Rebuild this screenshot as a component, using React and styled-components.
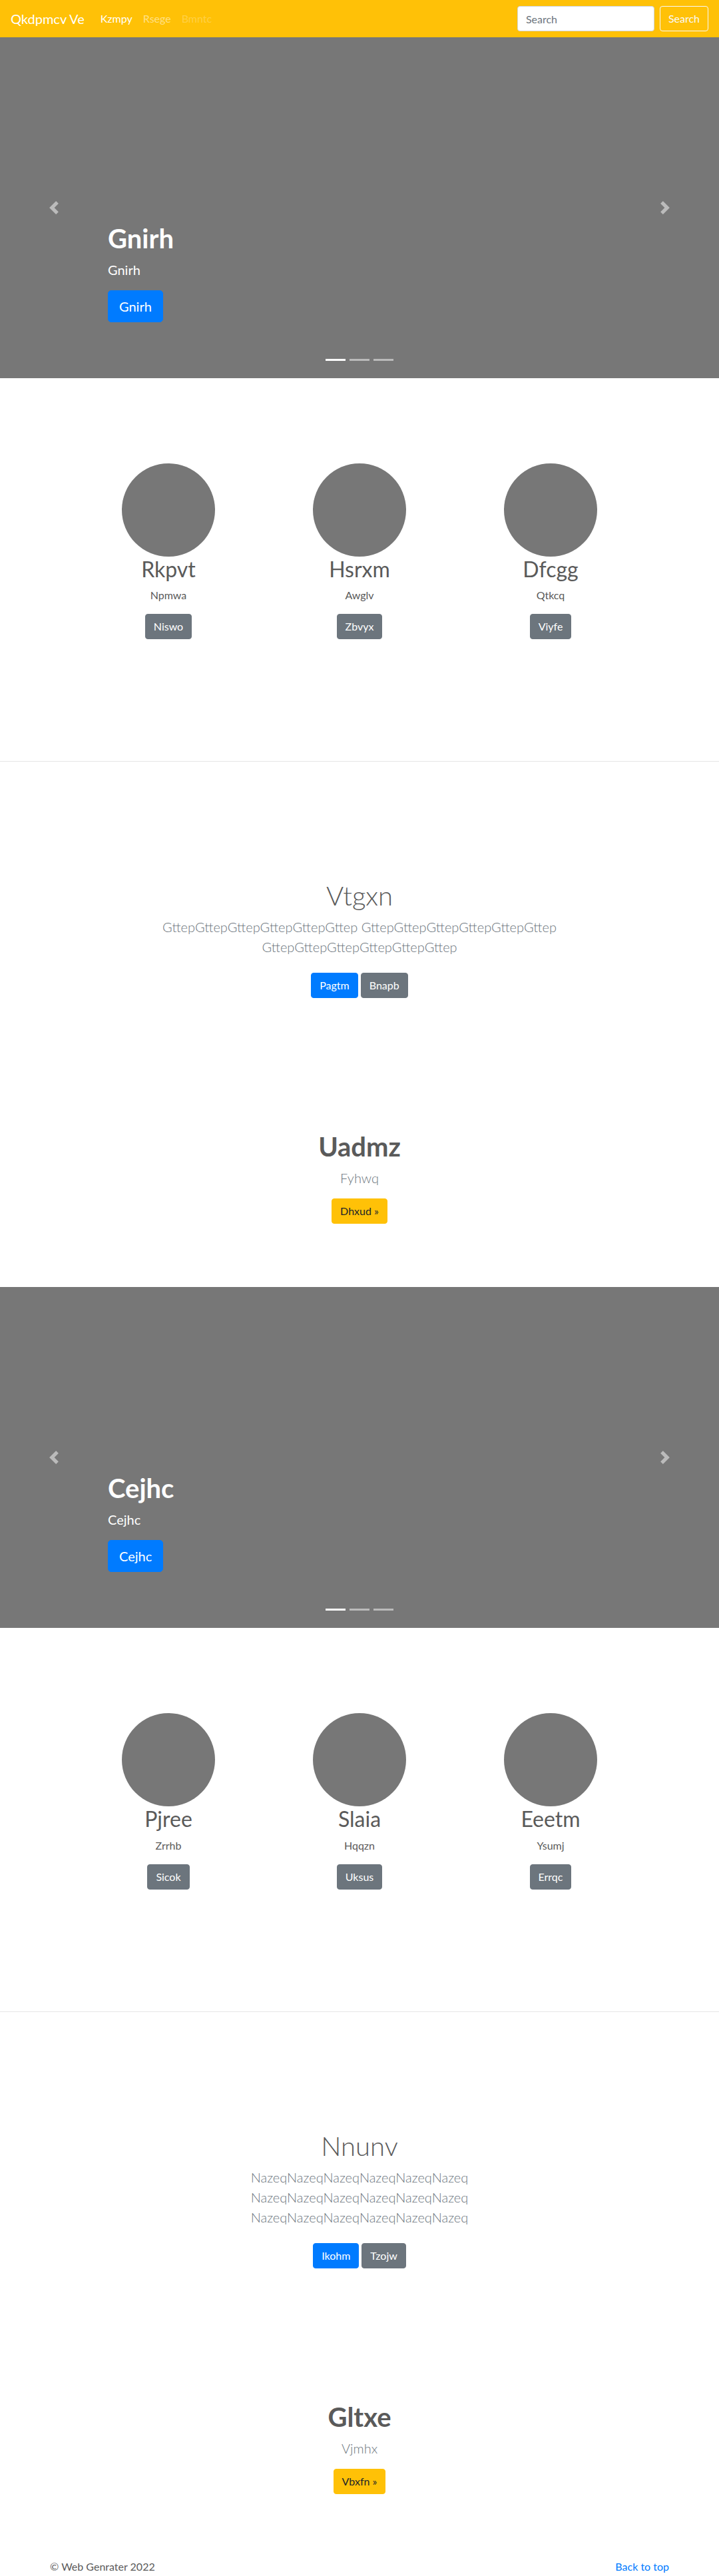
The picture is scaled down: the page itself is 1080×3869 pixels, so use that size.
import React from "react";
import styled, { createGlobalStyle, css } from "styled-components";

const GlobalStyle = createGlobalStyle`
    *, *::before, *::after { box-sizing: border-box; }
    body {
        margin: 0;
        font-family: Lato, "Open Sans", sans-serif;
        font-size: 16px;
        line-height: 1.5;
        color: #5a5a5a;
        background: #fff;
    }
`;

const blocks = [
    {
        slide: "Gnirh",
        features: [
            { name: "Rkpvt", text: "Npmwa", action: "Niswo" },
            { name: "Hsrxm", text: "Awglv", action: "Zbvyx" },
            { name: "Dfcgg", text: "Qtkcq", action: "Viyfe" },
        ],
        album: {
            title: "Vtgxn",
            lead: "GttepGttepGttepGttepGttepGttep GttepGttepGttepGttepGttepGttep GttepGttepGttepGttepGttepGttep",
            primary: "Pagtm",
            secondary: "Bnapb",
        },
        jumbo: { title: "Uadmz", lead: "Fyhwq", action: "Dhxud »" },
    },
    {
        slide: "Cejhc",
        features: [
            { name: "Pjree", text: "Zrrhb", action: "Sicok" },
            { name: "Slaia", text: "Hqqzn", action: "Uksus" },
            { name: "Eeetm", text: "Ysumj", action: "Errqc" },
        ],
        album: {
            title: "Nnunv",
            lead: "NazeqNazeqNazeqNazeqNazeqNazeq NazeqNazeqNazeqNazeqNazeqNazeq NazeqNazeqNazeqNazeqNazeqNazeq",
            primary: "Ikohm",
            secondary: "Tzojw",
        },
        jumbo: { title: "Gltxe", lead: "Vjmhx", action: "Vbxfn »" },
    },
];

// ---- buttons

const variants = {
    primary: css`
        background: #007bff;
        border-color: #007bff;
        color: #fff;
    `,
    secondary: css`
        background: #6c757d;
        border-color: #6c757d;
        color: #fff;
    `,
    warning: css`
        background: #ffc107;
        border-color: #ffc107;
        color: #212529;
    `,
    outlineLight: css`
        background: transparent;
        border-color: #f8f9fa;
        color: #f8f9fa;
    `,
};

const Button = styled.a`
    display: inline-block;
    font-family: inherit;
    font-weight: 400;
    text-decoration: none;
    text-align: center;
    border: 1px solid transparent;
    cursor: pointer;
    white-space: nowrap;
    ${(p) =>
        p.$size === "lg"
            ? css`
                  padding: 8px 16px;
                  font-size: 20px;
                  line-height: 1.5;
                  border-radius: 5px;
              `
            : css`
                  padding: 6px 12px;
                  font-size: 16px;
                  line-height: 1.5;
                  border-radius: 4px;
              `}
    ${(p) => variants[p.$variant || "primary"]}
`;

// ---- navbar

const Navbar = styled.nav`
    height: 56px;
    padding: 0 16px;
    background: #ffc107;
    display: flex;
    align-items: center;
`;

const Brand = styled.a`
    font-size: 20px;
    line-height: 30px;
    color: #fff;
    text-decoration: none;
    margin-right: 16px;
`;

const NavList = styled.ul`
    display: flex;
    list-style: none;
    margin: 0;
    padding: 0;
    flex: 1;
`;

const NavLink = styled.a`
    display: block;
    padding: 8px;
    color: ${(p) =>
        p.$state === "active"
            ? "#fff"
            : p.$state === "disabled"
            ? "rgba(255,255,255,.25)"
            : "rgba(255,255,255,.5)"};
    text-decoration: none;
`;

const SearchForm = styled.form`
    display: flex;
    align-items: center;
    gap: 8px;
`;

const SearchInput = styled.input`
    width: 206px;
    height: 38px;
    padding: 6px 12px;
    font-family: inherit;
    font-size: 16px;
    color: #495057;
    background: #fff;
    border: 1px solid #ced4da;
    border-radius: 4px;
    &::placeholder {
        color: #6c757d;
    }
`;

// ---- carousel

const CarouselFrame = styled.div`
    position: relative;
    height: 512px;
    background: #777;
    overflow: hidden;
`;

const Caption = styled.div`
    position: absolute;
    left: 15%;
    right: 15%;
    bottom: 48px;
    padding: 20px 0;
    color: #fff;
    text-align: left;
`;

const CaptionTitle = styled.h1`
    margin: 0 0 8px;
    font-size: 40px;
    font-weight: 700;
    line-height: 1.2;
`;

const CaptionText = styled.p`
    margin: 0 0 16px;
    font-size: 20px;
    line-height: 30px;
`;

const ButtonLine = styled.p`
    margin: 0 0 16px;
`;

const Control = styled.a`
    position: absolute;
    top: 0;
    bottom: 0;
    ${(p) => (p.$side === "next" ? "right: 0;" : "left: 0;")}
    width: 15%;
    display: flex;
    align-items: center;
    justify-content: center;
    opacity: 0.5;
`;

const Indicators = styled.ol`
    position: absolute;
    left: 0;
    right: 0;
    bottom: 16px;
    margin: 0;
    padding: 0;
    list-style: none;
    display: flex;
    justify-content: center;
    gap: 6px;
`;

const Indicator = styled.li`
    width: 30px;
    height: 3px;
    background: #fff;
    opacity: ${(p) => (p.$active ? 1 : 0.5)};
    margin: 10px 0;
`;

const Chevron = ({ dir }) => (
    <svg width="20" height="20" viewBox="0 0 8 8">
        <path
            fill="#fff"
            d={
                dir === "next"
                    ? "M2.75 0l-1.5 1.5L3.75 4l-2.5 2.5L2.75 8l4-4-4-4z"
                    : "M5.25 0l-4 4 4 4 1.5-1.5L4.25 4l2.5-2.5L5.25 0z"
            }
        />
    </svg>
);

function Carousel({ label }) {
    return (
        <CarouselFrame>
            <Indicators>
                <Indicator $active />
                <Indicator />
                <Indicator />
            </Indicators>
            <Caption>
                <CaptionTitle>{label}</CaptionTitle>
                <CaptionText>{label}</CaptionText>
                <ButtonLine>
                    <Button $size="lg" $variant="primary" href="#">
                        {label}
                    </Button>
                </ButtonLine>
            </Caption>
            <Control $side="prev" href="#">
                <Chevron dir="prev" />
            </Control>
            <Control $side="next" href="#">
                <Chevron dir="next" />
            </Control>
        </CarouselFrame>
    );
}

// ---- marketing

const Marketing = styled.section`
    padding: 128px 0 183px;
`;

const FeatureRow = styled.div`
    width: 861px;
    margin: 0 auto;
    display: grid;
    grid-template-columns: repeat(3, 1fr);
`;

const Feature = styled.div`
    display: flex;
    flex-direction: column;
    align-items: center;
    text-align: center;
`;

const Avatar = styled.div`
    width: 140px;
    height: 140px;
    border-radius: 50%;
    background: #777;
`;

const FeatureName = styled.h2`
    margin: 0 0 8px;
    font-size: 32px;
    font-weight: 400;
    line-height: 1.2;
`;

const FeatureText = styled.p`
    margin: 0 0 16px;
`;

const Divider = styled.hr`
    margin: 0;
    border: 0;
    border-top: 1px solid rgba(0, 0, 0, 0.1);
`;

// ---- album + jumbotron

const Album = styled.section`
    padding-top: 177px;
    text-align: center;
`;

const Jumbo = styled.section`
    padding: 199px 0 95px;
    text-align: center;
`;

const Narrow = styled.div`
    width: 610px;
    margin: 0 auto;
`;

const Heading = styled.h1`
    margin: 0 0 8px;
    font-size: 40px;
    line-height: 1.2;
    font-weight: ${(p) => (p.$light ? 300 : 700)};
`;

const Lead = styled.p`
    margin: 0 0 ${(p) => p.$gap || 16}px;
    font-size: 20px;
    font-weight: 300;
    line-height: 30px;
    color: #6c757d;
`;

const ButtonGroup = styled.p`
    margin: 0;
    display: flex;
    justify-content: center;
    gap: 4px;
`;

// ---- footer

const Footer = styled.footer`
    width: 960px;
    margin: 0 auto;
    padding: 2px 15px 0;
    display: flex;
    justify-content: space-between;
    line-height: 24px;
`;

const FooterLink = styled.a`
    color: #007bff;
    text-decoration: none;
`;

function Block({ data }) {
    return (
        <>
            <Carousel label={data.slide} />
            <Marketing>
                <FeatureRow>
                    {data.features.map((f) => (
                        <Feature key={f.name}>
                            <Avatar />
                            <FeatureName>{f.name}</FeatureName>
                            <FeatureText>{f.text}</FeatureText>
                            <Button $variant="secondary" href="#">
                                {f.action}
                            </Button>
                        </Feature>
                    ))}
                </FeatureRow>
            </Marketing>
            <Divider />
            <Album>
                <Narrow>
                    <Heading $light>{data.album.title}</Heading>
                    <Lead $gap={24}>{data.album.lead}</Lead>
                    <ButtonGroup>
                        <Button $variant="primary" href="#">
                            {data.album.primary}
                        </Button>
                        <Button $variant="secondary" href="#">
                            {data.album.secondary}
                        </Button>
                    </ButtonGroup>
                </Narrow>
            </Album>
            <Jumbo>
                <Heading>{data.jumbo.title}</Heading>
                <Lead>{data.jumbo.lead}</Lead>
                <Button $variant="warning" href="#">
                    {data.jumbo.action}
                </Button>
            </Jumbo>
        </>
    );
}

export default function App() {
    return (
        <>
            <GlobalStyle />
            <Navbar>
                <Brand href="#">Qkdpmcv Ve</Brand>
                <NavList>
                    <li>
                        <NavLink $state="active" href="#">
                            Kzmpy
                        </NavLink>
                    </li>
                    <li>
                        <NavLink href="#">Rsege</NavLink>
                    </li>
                    <li>
                        <NavLink $state="disabled" href="#">
                            Bmntc
                        </NavLink>
                    </li>
                </NavList>
                <SearchForm onSubmit={(e) => e.preventDefault()}>
                    <SearchInput type="text" placeholder="Search" />
                    <Button as="button" $variant="outlineLight" type="submit">
                        Search
                    </Button>
                </SearchForm>
            </Navbar>
            {blocks.map((b) => (
                <Block key={b.slide} data={b} />
            ))}
            <Footer>
                <span>© Web Genrater 2022</span>
                <FooterLink href="#">Back to top</FooterLink>
            </Footer>
        </>
    );
}
